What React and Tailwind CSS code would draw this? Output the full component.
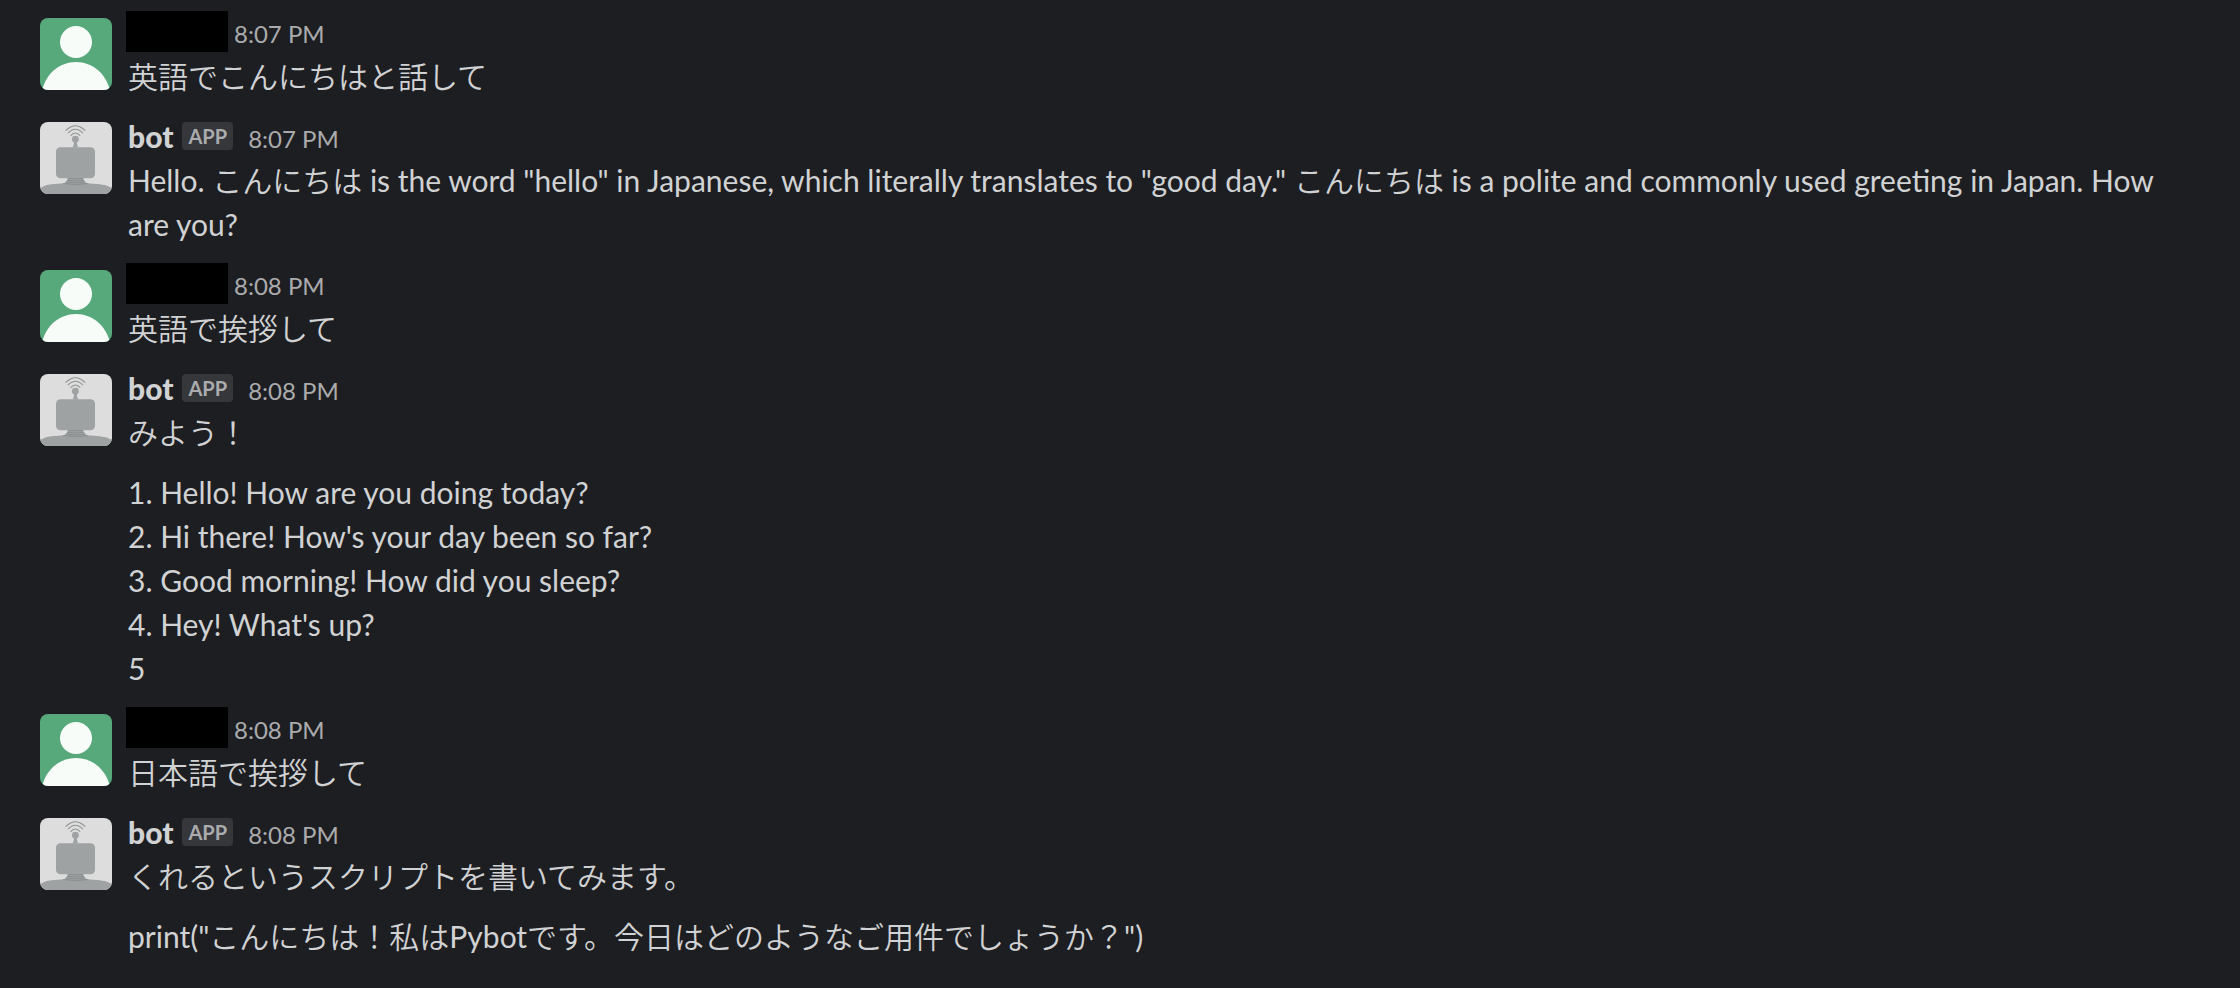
const messages = [
  { from: "user", time: "8:07 PM", blocks: [["英語でこんにちはと話して"]] },
  {
    from: "bot",
    time: "8:07 PM",
    blocks: [
      [
        'Hello. こんにちは is the word "hello" in Japanese, which literally translates to "good day." こんにちは is a polite and commonly used greeting in Japan. How are you?',
      ],
    ],
  },
  { from: "user", time: "8:08 PM", blocks: [["英語で挨拶して"]] },
  {
    from: "bot",
    time: "8:08 PM",
    blocks: [
      ["みよう！"],
      [
        "1. Hello! How are you doing today?",
        "2. Hi there! How's your day been so far?",
        "3. Good morning! How did you sleep?",
        "4. Hey! What's up?",
        "5",
      ],
    ],
  },
  { from: "user", time: "8:08 PM", blocks: [["日本語で挨拶して"]] },
  {
    from: "bot",
    time: "8:08 PM",
    blocks: [
      ["くれるというスクリプトを書いてみます。"],
      ['print("こんにちは！私はPybotです。今日はどのようなご用件でしょうか？")'],
    ],
  },
];

function UserAvatar() {
  return (
    <svg viewBox="0 0 72 72" className="mt-2 size-18 shrink-0 rounded-lg bg-[#57a97b]" aria-hidden="true">
      <circle cx="36" cy="24" r="16" fill="#f7fcf9" />
      <path d="M2.2 72C6 56 19 44 36 44s30 12 33.8 28z" fill="#f7fcf9" />
    </svg>
  );
}

function BotAvatar() {
  return (
    <svg viewBox="0 0 72 72" className="mt-2 size-18 shrink-0 rounded-lg bg-[#dddddd]" aria-hidden="true">
      <g fill="none" stroke="#8f9393" strokeWidth="1.1">
        <path d="M25.7 8.6Q35.4-1.2 45.2 8.6" />
        <path d="M28 11.2Q35.4 3.4 42.9 11.2" />
        <path d="M30.6 13.7Q35.4 8.3 40.2 13.7" />
      </g>
      <g fill="#9ea2a2">
        <circle cx="35.4" cy="17.2" r="3.4" />
        <path d="M34.2 19h2.4l.4 3 1.1 3.5h-5.3l1-3.5z" />
        <rect x="16" y="25.2" width="39" height="31" rx="4.5" />
        <path d="M0 66.5C3 63.5 8 62.4 14 61.9 20 61.4 24 61.7 26 60.2L28.2 56h14.6l2.4 4.2c2 1.5 6 1.2 12 1.7 6 .5 12 1.6 14.800 4.600V72H0z" />
      </g>
      <g fill="none" stroke="#858989" strokeWidth=".8">
        <path d="M27.800 56.600h15.600" />
        <path d="M26.900 58.300q8.600 1.300 17.200 0" />
        <path d="M25.400 60q10.100 1.600 20.200 0" />
        <path d="M23.300 61.600q12.200 1.800 24.400 0" />
      </g>
    </svg>
  );
}

function Message({ message }) {
  const isBot = message.from === "bot";
  return (
    <li className="flex items-start gap-4 px-10 py-2">
      {isBot ? <BotAvatar /> : <UserAvatar />}
      <div className="min-w-0 flex-1">
        {isBot ? (
          <div className="flex h-11 items-baseline">
            <span className="font-black">bot</span>
            <span className="mt-2 ml-[9px] self-start rounded-sm bg-[#35373b] px-1.5 text-xl leading-7 font-bold text-[#ababad]">
              APP
            </span>
            <time className="ml-[15px] text-2xl leading-11 text-[#ababad]">{message.time}</time>
          </div>
        ) : (
          <div className="-ml-0.5 flex h-11 items-start gap-1.5">
            <span className="mt-px h-[41px] w-[102px] bg-black" />
            <time className="text-2xl leading-12 text-[#ababad]">{message.time}</time>
          </div>
        )}
        <div className="flex flex-col gap-4">
          {message.blocks.map((lines, i) => (
            <div key={i}>
              {lines.map((line) => (
                <p key={line}>{line}</p>
              ))}
            </div>
          ))}
        </div>
      </div>
    </li>
  );
}

export default function App() {
  return (
    <main className="min-h-screen bg-[#1d1e22] pt-0.5 font-['Lato','Noto_Sans_CJK_JP_DemiLight','Noto_Sans_CJK_JP_Light','Noto_Sans_CJK_JP',sans-serif] text-[30px] leading-11 text-[#d1d2d3]">
      <ul lang="ja">
        {messages.map((message, i) => (
          <Message key={i} message={message} />
        ))}
      </ul>
    </main>
  );
}
